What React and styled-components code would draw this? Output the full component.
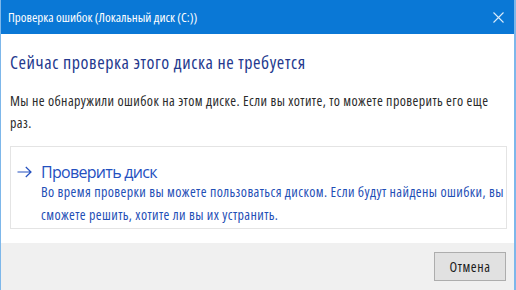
import * as React from "react";
import styled, { createGlobalStyle } from "styled-components";

const GlobalStyle = createGlobalStyle`
  html, body {
    margin: 0;
    padding: 0;
    background: #ffffff;
  }
  body {
    font-family: "Open Sans", "Liberation Sans", sans-serif;
    font-stretch: 75%;
  }
`;

const Window = styled.div`
  width: 516px;
  height: 290px;
  display: flex;
  flex-direction: column;
  box-sizing: border-box;
  border-left: 1px solid #7db7ea;
  border-right: 2px solid #7db7ea;
  background: #ffffff;
  overflow: hidden;
`;

const TitleBar = styled.div`
  height: 34px;
  flex: none;
  display: flex;
  align-items: center;
  justify-content: space-between;
  padding: 0 10px 0 7px;
  background: #0a78d6;
  color: #ffffff;
`;

const TitleText = styled.span`
  font-size: 13px;
`;

const CloseButton = styled.button`
  border: none;
  background: transparent;
  padding: 0;
  display: flex;
  color: #d9ebfa;
`;

const Content = styled.div`
  flex: 1;
  display: flex;
  flex-direction: column;
  padding: 16px 7px 0 9px;
  white-space: nowrap;
`;

const Heading = styled.h1`
  margin: 0;
  font-size: 18px;
  font-weight: 400;
  line-height: 24px;
  letter-spacing: 0.6px;
  color: #24398e;
`;

const Message = styled.p`
  margin: 16px 0 0;
  font-size: 14px;
  line-height: 22px;
  letter-spacing: 0.4px;
  color: #2b2b2b;
`;

const CommandLink = styled.button`
  margin-top: 12px;
  display: flex;
  align-items: flex-start;
  gap: 9px;
  height: 83px;
  box-sizing: border-box;
  padding: 17px 6px 0 6px;
  border: 1px solid #e4e4e4;
  background: #ffffff;
  text-align: left;
  font-family: inherit;
  font-stretch: 75%;
  cursor: pointer;
`;

const Arrow = styled.svg`
  flex: none;
  margin-top: 2px;
`;

const LinkBody = styled.div`
  display: flex;
  flex-direction: column;
`;

const LinkTitle = styled.span`
  font-size: 16px;
  font-stretch: 100%;
  line-height: 16px;
  letter-spacing: -0.7px;
  color: #2450bf;
`;

const LinkNote = styled.span`
  font-size: 14px;
  line-height: 23px;
  letter-spacing: 0.4px;
  color: #1f4fb6;
`;

const Footer = styled.div`
  height: 47px;
  flex: none;
  display: flex;
  align-items: center;
  justify-content: flex-end;
  padding-right: 8px;
  background: #f0f0f0;
`;

const Button = styled.button`
  width: 72px;
  height: 29px;
  box-sizing: border-box;
  border: 1px solid #adadad;
  background: #e1e1e1;
  font-family: inherit;
  font-stretch: 75%;
  font-size: 14px;
  letter-spacing: 0.6px;
  color: #1b1b1b;
`;

export default function App() {
  return (
    <>
      <GlobalStyle />
      <Window>
        <TitleBar>
          <TitleText>Проверка ошибок (Локальный диск (C:))</TitleText>
          <CloseButton aria-label="Закрыть">
            <svg width="11" height="11" viewBox="0 0 11 11">
              <path d="M0.5 0.5L10.5 10.5M10.5 0.5L0.5 10.5" stroke="currentColor" strokeWidth="1.1" />
            </svg>
          </CloseButton>
        </TitleBar>
        <Content>
          <Heading>Сейчас проверка этого диска не требуется</Heading>
          <Message>
            Мы не обнаружили ошибок на этом диске. Если вы хотите, то можете проверить его еще
            <br />
            раз.
          </Message>
          <CommandLink>
            <Arrow width="15" height="12" viewBox="0 0 15 12">
              <path d="M0.5 6H14M8.8 1L14 6L8.8 11" fill="none" stroke="#2450bf" strokeWidth="1.2" />
            </Arrow>
            <LinkBody>
              <LinkTitle>Проверить диск</LinkTitle>
              <LinkNote>
                Во время проверки вы можете пользоваться диском. Если будут найдены ошибки, вы
                <br />
                сможете решить, хотите ли вы их устранить.
              </LinkNote>
            </LinkBody>
          </CommandLink>
        </Content>
        <Footer>
          <Button>Отмена</Button>
        </Footer>
      </Window>
    </>
  );
}
